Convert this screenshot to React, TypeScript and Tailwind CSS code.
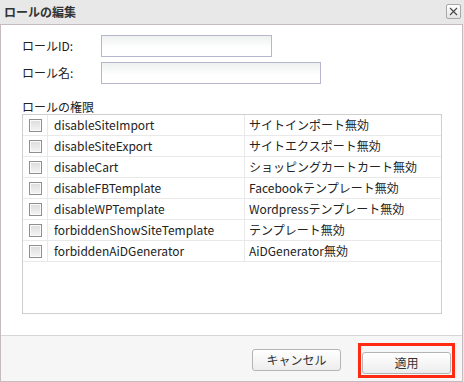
import { useState } from "react"

const permissions = [
  { key: "disableSiteImport", label: "サイトインポート無効" },
  { key: "disableSiteExport", label: "サイトエクスポート無効" },
  { key: "disableCart", label: "ショッピングカートカート無効" },
  { key: "disableFBTemplate", label: "Facebookテンプレート無効" },
  { key: "disableWPTemplate", label: "Wordpressテンプレート無効" },
  { key: "forbiddenShowSiteTemplate", label: "テンプレート無効" },
  { key: "forbiddenAiDGenerator", label: "AiDGenerator無効" },
]

function Checkbox({ checked, onChange }: { checked: boolean; onChange: () => void }) {
  return (
    <button
      onClick={onChange}
      className="w-[13px] h-[13px] border border-[#8f8f8f] bg-gradient-to-b from-[#dcdcdc] to-[#f4f4f4] shadow-[inset_0_0_0_1px_#fafafa] flex items-center justify-center text-[10px] leading-none text-[#333]"
    >
      {checked ? "✓" : ""}
    </button>
  )
}

export default function App() {
  const [checked, setChecked] = useState<Record<string, boolean>>({})

  return (
    <div className="w-[464px] h-[382px] bg-[#e8e8e8] flex flex-col text-[#222] font-['Noto_Sans_CJK_JP','Noto_Sans',sans-serif]">
      <div className="h-[24px] shrink-0 flex items-center justify-between pl-[4px] pr-[3px]">
        <h1 className="text-[12px] font-bold text-[#333]">ロールの編集</h1>
        <button className="w-[15px] h-[15px] mt-[-2px] rounded-[2px] border border-[#a8a8a8] bg-gradient-to-b from-white to-[#e4e4e4] flex items-center justify-center">
          <svg width="9" height="9" viewBox="0 0 9 9">
            <path d="M1 1 L8 8 M8 1 L1 8" stroke="#444" strokeWidth="1.1" />
          </svg>
        </button>
      </div>

      <div className="w-[463px] flex-1 flex flex-col border-x border-t border-b border-[#c6bcbf]">
        <div className="h-[310px] bg-white pl-[21px] pt-[10px] flex flex-col">
          <div className="flex items-center h-[22px]">
            <label className="w-[79px] text-[12px]">ロールID:</label>
            <input className="w-[171px] h-[22px] border border-[#b6b6cc] bg-gradient-to-b from-[#eef0f0] to-white to-[60%] outline-none px-1 text-[12px]" />
          </div>
          <div className="flex items-center h-[22px] mt-[5px]">
            <label className="w-[79px] text-[12px]">ロール名:</label>
            <input className="w-[220px] h-[22px] border border-[#b6b6cc] bg-gradient-to-b from-[#eef0f0] to-white to-[60%] outline-none px-1 text-[12px]" />
          </div>

          <div className="mt-[14px] h-[17px] text-[12px] leading-[17px]">ロールの権限</div>
          <div className="w-[420px] h-[200px] mt-[-1px] border border-[#cfcfcf]">
            {permissions.map((p) => (
              <div key={p.key} className="flex h-[21px] border-b border-[#e9e9e9] text-[12px]">
                <div className="w-[25px] flex items-center justify-center border-r border-[#e9e9e9] pl-[1px]">
                  <Checkbox
                    checked={!!checked[p.key]}
                    onChange={() => setChecked({ ...checked, [p.key]: !checked[p.key] })}
                  />
                </div>
                <div className="w-[197px] flex items-center pl-[6px] border-r border-[#e9e9e9]">{p.key}</div>
                <div className="flex-1 flex items-center pl-[4px]">{p.label}</div>
              </div>
            ))}
          </div>
        </div>

        <div className="flex-1 bg-[#f6f6f6] border-t border-[#d6d6d6] flex justify-end items-start pt-[13px] pr-[11px] gap-[21px]">
          <button className="w-[89px] h-[22px] rounded-[3px] border border-[#b4b4b4] bg-gradient-to-b from-white to-[#ededed] text-[12px] text-[#333]">
            キャンセル
          </button>
          <div className="relative">
            <button className="w-[89px] h-[22px] rounded-[3px] border border-[#b4b4b4] bg-gradient-to-b from-white to-[#ededed] text-[12px] text-[#333]">
              適用
            </button>
            <span className="absolute left-[-4px] top-[-6px] w-[97px] h-[35px] border-[3px] border-[#ff2a10] pointer-events-none" />
          </div>
        </div>
      </div>
    </div>
  )
}
